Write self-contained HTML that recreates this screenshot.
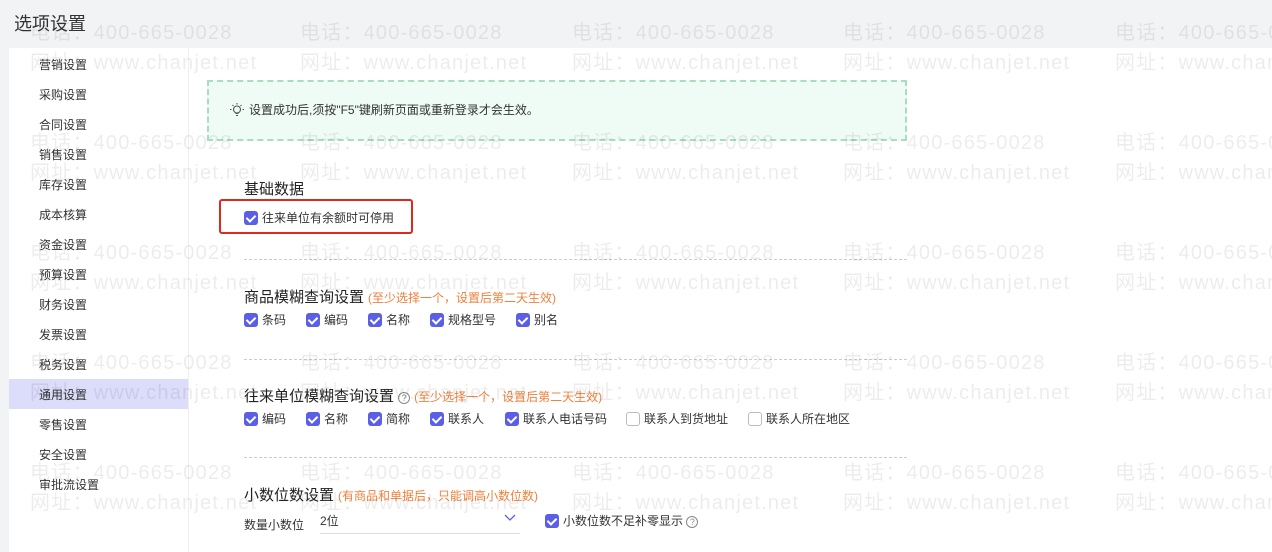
<!DOCTYPE html>
<html><head><meta charset="utf-8"><style>
*{margin:0;padding:0;box-sizing:border-box}
body{width:1272px;height:552px;overflow:hidden;background:#f2f3f5;font-family:"Liberation Sans","Noto Sans CJK SC",sans-serif;position:relative;color:#333}
.title{position:absolute;left:14px;top:10px;font-size:18px;color:#333}
.panel{position:absolute;left:9px;top:48px;right:0;bottom:0;background:#fff}
.side{position:absolute;left:9px;top:48px;width:180px;bottom:0;border-right:1px solid #eee}
.side div{position:absolute;left:30px;font-size:12px;color:#333;height:30px;line-height:30px}
.sel{position:absolute;left:9px;top:379px;width:179px;height:30px;background:#dcdcfb}
.note{position:absolute;left:207px;top:80px;width:700px;height:61px;background:#effbf5;border:2px dashed #a9dcc3;font-size:12px;color:#333;line-height:57px;padding-left:40px}
.abs{position:absolute;white-space:nowrap}
.h{font-size:15px;color:#222}
.h small{font-size:12px;color:#f0813b;margin-left:4px}
.cb{position:absolute;font-size:12px;color:#333;white-space:nowrap;line-height:16px}
.cb i{display:inline-block;width:14px;height:14px;border-radius:3px;background:#5a5fe6;vertical-align:-3px;margin-right:4px;position:relative}
.cb i:after{content:"";position:absolute;left:4px;top:1.5px;width:4px;height:7px;border:solid #fff;border-width:0 2px 2px 0;transform:rotate(45deg)}
.cb i.u{background:#fff;border:1px solid #bbb}
.cb i.u:after{display:none}
.dash{position:absolute;left:244px;width:663px;border-top:1px dashed #ccc}
.wm{position:absolute;font-size:20px;font-weight:normal;color:rgba(0,0,0,0.075);white-space:nowrap;letter-spacing:1.2px;z-index:10}
.q{display:inline-block;width:12px;height:12px;border:1px solid #888;border-radius:50%;font-size:9px;line-height:10px;text-align:center;color:#888;vertical-align:0}
</style></head><body>
<div class="title">选项设置</div>
<div class="panel"></div>
<div class="sel"></div>
<div class="side">
<div style="top:2px">营销设置</div><div style="top:32px">采购设置</div><div style="top:62px">合同设置</div><div style="top:92px">销售设置</div><div style="top:122px">库存设置</div><div style="top:152px">成本核算</div><div style="top:182px">资金设置</div><div style="top:212px">预算设置</div><div style="top:242px">财务设置</div><div style="top:272px">发票设置</div><div style="top:302px">税务设置</div><div style="top:332px">通用设置</div><div style="top:362px">零售设置</div><div style="top:392px">安全设置</div><div style="top:422px">审批流设置</div>
</div>
<div class="note"><svg style="position:absolute;left:20px;top:20px" width="16" height="16" viewBox="0 0 16 16" fill="none" stroke="#555" stroke-width="1.1"><circle cx="8" cy="7.5" r="3.5"/><path d="M6.5 11.5h3M7 13.5h2M8 1v1.5M2.5 7.5H1M15 7.5h-1.5M3.5 3l1 1M12.5 3l-1 1"/></svg>设置成功后,须按"F5"键刷新页面或重新登录才会生效。</div>

<div class="abs h" style="left:244px;top:178px">基础数据</div>
<div style="position:absolute;left:219px;top:199px;width:194px;height:35px;border:2px solid #e0281e;border-radius:3px"></div>
<div class="cb" style="left:244px;top:210px"><i></i>往来单位有余额时可停用</div>
<div class="dash" style="top:259px"></div>

<div class="abs h" style="left:244px;top:286px">商品模糊查询设置<small>(至少选择一个，设置后第二天生效)</small></div>
<div class="cb" style="left:244px;top:312px"><i></i>条码</div>
<div class="cb" style="left:306px;top:312px"><i></i>编码</div>
<div class="cb" style="left:368px;top:312px"><i></i>名称</div>
<div class="cb" style="left:430px;top:312px"><i></i>规格型号</div>
<div class="cb" style="left:516px;top:312px"><i></i>别名</div>
<div class="dash" style="top:359px"></div>

<div class="abs h" style="left:244px;top:385px">往来单位模糊查询设置 <span class="q">?</span><small>(至少选择一个，设置后第二天生效)</small></div>
<div class="cb" style="left:244px;top:411px"><i></i>编码</div>
<div class="cb" style="left:306px;top:411px"><i></i>名称</div>
<div class="cb" style="left:368px;top:411px"><i></i>简称</div>
<div class="cb" style="left:430px;top:411px"><i></i>联系人</div>
<div class="cb" style="left:505px;top:411px"><i></i>联系人电话号码</div>
<div class="cb" style="left:626px;top:411px"><i class="u"></i>联系人到货地址</div>
<div class="cb" style="left:748px;top:411px"><i class="u"></i>联系人所在地区</div>
<div class="dash" style="top:457px"></div>

<div class="abs h" style="left:244px;top:484px">小数位数设置<small>(有商品和单据后，只能调高小数位数)</small></div>
<div class="abs" style="left:244px;top:516px;font-size:12px">数量小数位</div>
<div class="abs" style="left:320px;top:512px;font-size:12px;width:200px;height:22px;border-bottom:1px solid #ddd">2位<svg style="position:absolute;right:4px;top:2px" width="12" height="8" viewBox="0 0 12 8"><path d="M1 1l5 5 5-5" fill="none" stroke="#5a5fe6" stroke-width="1.3"/></svg></div>
<div class="cb" style="left:545px;top:513px"><i></i>小数位数不足补零显示 <span class="q">?</span></div>

<div id="wm"></div>
<script>
var s='';var xs=[30,300,572,843,1115];var ys=[16,126,236,346,456];
xs.forEach(function(x){ys.forEach(function(y){s+='<div class="wm" style="left:'+x+'px;top:'+y+'px">电话：400-665-0028</div><div class="wm" style="left:'+x+'px;top:'+(y+30)+'px">网址：www.chanjet.net</div>';});});
document.getElementById('wm').innerHTML=s;
</script>
</body></html>
